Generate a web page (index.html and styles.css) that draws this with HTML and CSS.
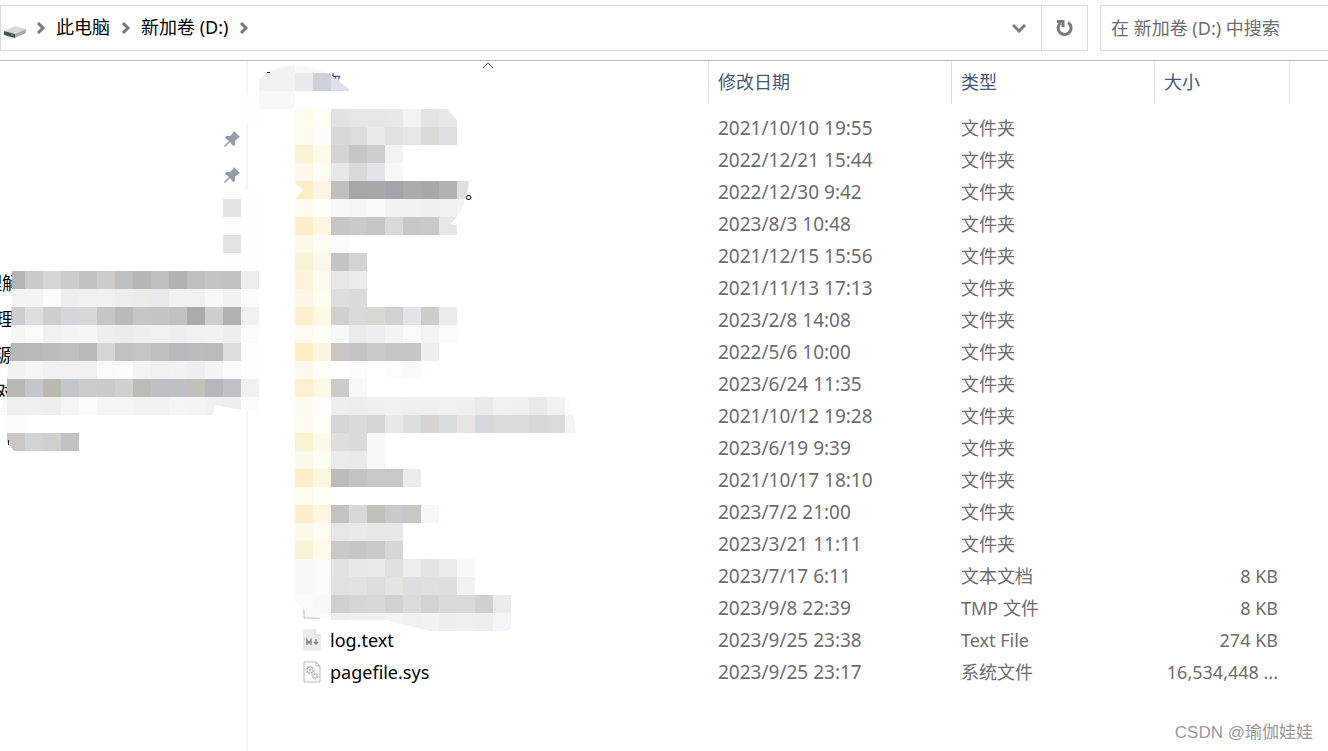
FILE: index.html
```
<!DOCTYPE html>
<html lang="zh-CN">

<head>
    <meta charset="UTF-8">
    <meta name="viewport" content="width=device-width, initial-scale=1.0">
    <title>新加卷 (D:)</title>
    <link rel="stylesheet" href="styles.css">
</head>

<body>
    <header class="toolbar">
        <div class="address">
            <svg class="drive" width="24" height="14" viewBox="0 0 24 14">
                <path d="M1 6 12 1l11 3-11 5z" fill="#d9dadc" />
                <path d="M1 6l11 3v4L1 10z" fill="#4b4f50" />
                <path d="M12 9l11-5v4l-11 5z" fill="#a9abae" />
                <path d="M8 9h2v2H8z" fill="#3fae49" />
            </svg>
            <svg class="sep" width="10" height="12" viewBox="0 0 10 12"><path d="M2 1l5 5-5 5" /></svg>
            <button class="crumb">此电脑</button>
            <svg class="sep" width="10" height="12" viewBox="0 0 10 12"><path d="M2 1l5 5-5 5" /></svg>
            <button class="crumb">新加卷 (D:)</button>
            <svg class="sep" width="10" height="12" viewBox="0 0 10 12"><path d="M2 1l5 5-5 5" /></svg>
            <button class="drop" aria-label="历史记录">
                <svg width="14" height="10" viewBox="0 0 14 10"><path d="M1 2l6 6 6-6" /></svg>
            </button>
            <button class="refresh" aria-label="刷新">
                <svg width="18" height="18" viewBox="0 0 18 18">
                    <path d="M12 3.5A6.5 6.5 0 1 1 4.5 4" />
                    <path d="M1 2.5h6v5.500" />
                </svg>
            </button>
        </div>
        <input class="search" type="text" placeholder="在 新加卷 (D:) 中搜索" aria-label="搜索">
    </header>

    <div class="content">
        <nav class="side">
            <ul class="pins">
                <li><svg width="16" height="16" viewBox="0 0 16 16"><path d="M10 0l6 6-2 1-3 3v4l-2 1-3-4-5 5-1-1 5-5-4-3 1-2h4l3-3z" /></svg></li>
                <li><svg width="16" height="16" viewBox="0 0 16 16"><path d="M10 0l6 6-2 1-3 3v4l-2 1-3-4-5 5-1-1 5-5-4-3 1-2h4l3-3z" /></svg></li>
            </ul>
            <ul class="folders">
                <li class="long">理解</li>
                <li>理</li>
                <li>源</li>
                <li>对</li>
            </ul>
        </nav>

        <main class="files">
            <table>
                <colgroup>
                    <col>
                    <col class="col-date">
                    <col class="col-type">
                    <col class="col-size">
                </colgroup>
                <thead>
                    <tr>
                        <th class="name">
                            <svg class="sort" width="12" height="7" viewBox="0 0 12 7"><path d="M1 6l5-5 5 5" /></svg>
                            名称
                        </th>
                        <th>修改日期</th>
                        <th>类型</th>
                        <th>大小</th>
                    </tr>
                </thead>
                <tbody id="rows"></tbody>
            </table>
        </main>

        <svg class="mosaic" width="600" height="640" viewBox="0 61 600 640">
            <defs>
                <clipPath id="clipSide">
                    <path d="M223 199h18v18h-18zM223 235h18v18h-18zM12 271H259V412L241 410 215 405 213 415H25V433H79V451H14L7 442V415H0L7 380 11 343z" />
                </clipPath>
                <clipPath id="clipHead">
                    <path d="M259 79Q275 65 295 65.500Q315 66 331 75L349 89V91H295V109H259z" />
                </clipPath>
                <clipPath id="clipList">
                    <path d="M295 109H447L457 120V181H469Q466 211 450 224L457 225V397H565Q575 412 576 433H511V629L507 631H430Q405 625 405 625L386 620H331L310 616 295 601V199L303 190 295 183z" />
                </clipPath>
            </defs>
            <path d="M241 95h18v30h-18zM241 190h18v221h-18zM223 190h18v81h-18z" fill="#fefefe" />
            <g id="side" clip-path="url(#clipSide)"></g>
            <g id="head" clip-path="url(#clipHead)"></g>
            <g id="list" clip-path="url(#clipList)"></g>
            <path d="M267 72h3v1h-3zM8 440h1v5h-1z" fill="#222" />
        </svg>

        <p class="watermark">CSDN @瑜伽娃娃</p>
    </div>

    <script>
        const files = [
            ['', '2021/10/10 19:55', '文件夹', ''],
            ['', '2022/12/21 15:44', '文件夹', ''],
            ['。', '2022/12/30 9:42', '文件夹', '', 'dot'],
            ['', '2023/8/3 10:48', '文件夹', ''],
            ['', '2021/12/15 15:56', '文件夹', ''],
            ['', '2021/11/13 17:13', '文件夹', ''],
            ['', '2023/2/8 14:08', '文件夹', ''],
            ['', '2022/5/6 10:00', '文件夹', ''],
            ['', '2023/6/24 11:35', '文件夹', ''],
            ['', '2021/10/12 19:28', '文件夹', ''],
            ['', '2023/6/19 9:39', '文件夹', ''],
            ['', '2021/10/17 18:10', '文件夹', ''],
            ['', '2023/7/2 21:00', '文件夹', ''],
            ['', '2023/3/21 11:11', '文件夹', ''],
            ['', '2023/7/17 6:11', '文本文档', '8 KB'],
            ['', '2023/9/8 22:39', 'TMP 文件', '8 KB', 'blank'],
            ['log.text', '2023/9/25 23:38', 'Text File', '274 KB', 'md'],
            ['pagefile.sys', '2023/9/25 23:17', '系统文件', '16,534,448 ...', 'sys'],
        ];

        const page = '<path d="M1 1h12l4 4v16H1z" fill="#fcfcfc" stroke="#b9b9b9" /><path d="M13 1v4h4" fill="none" stroke="#b9b9b9" />';
        const icons = {
            blank: page,
            md: '<path d="M0 0h12l6 6v16H0z" fill="#ececec" /><path d="M12 0v6h6" fill="#fff" stroke="#d8d8d8" />' +
                '<path d="M4 16v-5l2 3 2-3v5M13 10v5M11 13l2 2 2-2" fill="none" stroke="#8a8a8a" stroke-width="1.5" />',
            sys: page +
                '<g fill="none" stroke="#b6bec4"><circle cx="7" cy="9" r="4" stroke-dasharray="2 1" /><circle cx="7" cy="9" r="3" /><circle cx="7" cy="9" r="1" />' +
                '<circle cx="12" cy="15" r="3" stroke-dasharray="2 1" /><circle cx="12" cy="15" r="2" /></g>',
        };

        document.getElementById('rows').innerHTML = files.map(([name, date, type, size, kind]) => {
            const icon = icons[kind] ? `<svg width="18" height="22" viewBox="0 0 18 22">${icons[kind]}</svg>` : '';
            return `<tr>
                <td class="name ${kind || ''}">${icon}<span>${name}</span></td>
                <td class="date">${date}</td>
                <td>${type}</td>
                <td class="size">${size}</td>
            </tr>`;
        }).join('');

        // each line is: x, y of the first block, then one colour per block, '-' skips a block
        const size = 18;
        const mosaic = {
            side: `223 199 e3e4e6
                223 235 e3e4e6
                7 271 b3b4b6 c9cbca d5d5d5 cecccb c2c2c2 cecbc9 bdc0c3 b6b6b6 bcbec1 b2b2b2 bebebe c4c4c4 c4c2c1 eceeed
                7 289 f4f4f4 f4f4f4 f8fcfa eeeeee f0f0f1 f1f1f1 eceeed eaecea e9e9e9 f1f1f1 f1f1f1 f8f8f8 f2f2f2 fcfcfc
                7 307 cbcdd0 dedede d0cecc d4d6d9 d9d7d5 c5c5c4 bababa c5c5c4 c4c4c4 bfc1c5 a9acab cecece b0b3b1 eff1f0
                7 325 f6f6f6 fcfcfa f0f0f0 f4f4f5 f6f6f4 eeeeee ececec eeeeee f0f0f0 eeeeee f1f1f1 f2f2f2 f0eeed fafcfb
                7 343 b6b8b7 b9b9b9 bdbbb9 bdc0bf bababa d5d5d5 c1c1c1 c5c5c4 c1bfbd b7b9bc bcbcba bbbbbb dadddb fefefe
                7 361 f0f3f2 f5f5f6 eff1f0 f0f0ee eff1f0 fafafa fcfcfc f4f4f5 f0f0f0 f2f2f3 eeeeee f4f4f5 f8fbfa fefefe
                7 379 bab8b6 c4c6ca bbb7b1 c2c6ca cbcbcb cacaca d0d0d0 bbbbb8 bfc0c3 bfc0c3 c2c0bb b5b7bb bfc1c6 f0f0f0
                -11 397 f8f8f8 efefef efefef eeeeec f5f5f6 f8fbf9 f5f5f6 f5f5f6 f0f1f0 f0f1f0 f5f5f6 f4f4f2 eff1f0 eeeeef fcfcfc
                7 415 fafafa
                7 433 c9c8c6 d2d3d5 cfcfcc c1c2c6`,
            head: `259 55 f2f2f2 f2f2f2 f8f8f8 f8f8f8 f8f8f8
                259 73 f2f2f2 f2f2f2 e9eaee cdd1da dde1e7
                259 91 f8f8f8 f8f8f8`,
            list: `295 109 fffaec fffdf6 e3e2e2 e6e6e7 e6e6e7 e6e9e8 f3f3f3 e3e3e2 e7e7e7
                295 127 fffaed fdfcf8 d9d8d7 dadcdf e8eae9 e1e1e2 e6e6e6 d9d9d7 e0e0e3
                295 145 fbf2d4 fef9e9 d4d4d2 c4c7c6 cececd f3f3f3
                295 163 fcf9ea fffcf5 e6e7e9 dbd9d7 e1e3e6 f8f8f8
                295 181 fdecc5 fef5e2 c1bfbe a5a8ab a8a8a6 a2a5a9 adabac a8a8a8 b1b3b2 dee0df
                295 199 fffbef fffdf7 f7f8f8 f4f7f7 f9f9f9 f2f2f2 f2f2f2 efefee f0f0f0 f4f4f4
                295 217 fceec8 fdf6e3 c6c6c7 cccac8 c4c6ca d9d9d7 c5c8c6 cbc9c7 e4e6e9
                295 235 fef9e7 fffcf5 fcfcfd
                295 253 fbf2d3 fdf7e9 c4c4c4 d2d3d5
                295 271 fef2dc fefaef e6e6e4 eaeceb
                295 289 fef6e4 fffcf0 dededf d9dbda
                295 307 fdefcc fff8e3 d0d0ce d9d9da d8d7d4 d1d1d2 e2e4e7 cecccb ebebeb
                295 325 fefaef fefef9 f8f8f8 ebebec eeeeee f4f4f4 f9fafd f1f4f3 fafafa
                295 343 fceec4 fef4e1 cbc6c5 c1c5c9 cacacb c7c6c4 c3c6c5 eeeeee
                295 361 fdf9ed fefef9 - fcfcfd - fdfdfd f8f9f9
                295 379 fcf0d1 fef8e5 cbcbcb f6f9f8
                295 397 fefaef fefefb eeeeef ebeeed efefed eef1f0 efefef efefed f0f0f0 efefef e8ebea f0f0f0 efefef e9e9e9 f1f1f1 fbfbfb
                295 415 fffaee fefdf6 d5d5d5 dcdad9 d2d6d7 e8e8e9 dcdee0 d5d4d0 d9dbde e6e5e3 d5d8dc dddbd9 dadbdf d6d7da dbdbdc f4f4f4
                295 433 fbf2d1 fef9e8 dededf dbdad8 f6f8fb
                295 451 fbf9ea fefcf5 ebebeb eaeaeb f7f7f7
                295 469 fbeec6 fcf6dd b9bdbb c3c3c1 cac8c6 c6c8cb e9ebed
                295 487 fefaef fefef9
                295 505 fceecb fdf6e1 c3c3c3 d6d9d8 c3bfbb c9cacd c9c7c5 f5f7fa
                295 523 fdf9e6 fefcf3 e5e6e7 e9e9e7 e7e7e7 e8e8e8
                295 541 fbf1d4 fef9e8 c8c8c6 c6c6c4 c9c9c7 d5d6d8
                295 559 f7f8f8 f9fafa e2e2e0 e8e8e6 e9e9e9 e0e0e0 ededed e3e3e1 ebebeb f6f9f8
                295 577 f7f8f8 f9fafa e1e1df e2e2e1 dddddd e5e4e2 dddee1 e0e0e0 dededc eef2f0
                295 595 f8fbfa f8f8f9 d0d0d0 d5d5d3 d7d7d7 d2d0d1 d9dbde d2d2d2 d9d9d9 dbd9d7 d0d0d0 eaebee
                295 613 fafafa fafafa eeeeec f0f0f0 f0f0f0 f3f3f1 f0f0f0 f2f2f2 eeeeee efefef f0eeed f4f5f8`,
        };

        for (const id in mosaic) {
            document.getElementById(id).innerHTML = mosaic[id].split('\n').map((line) => {
                const [x, y, ...colors] = line.trim().split(' ');
                return colors.map((color, i) => color === '-' ? '' :
                    `<rect x="${Number(x) + i * size}" y="${y}" width="${size}" height="${size}" fill="#${color}" />`
                ).join('');
            }).join('');
        }
    </script>
</body>

</html>
```
FILE: styles.css
```
* {
    margin: 0;
    padding: 0;
    box-sizing: border-box;
}

body {
    min-height: 100vh;
    display: flex;
    flex-direction: column;
    background-color: #fff;
    color: #000;
    font-family: "Noto Sans", "Noto Sans CJK SC", sans-serif;
    font-size: 18px;
    overflow-x: hidden;
}

button {
    border: none;
    background: none;
    font: inherit;
    color: inherit;
}

ul {
    list-style: none;
}

/* address bar */
.toolbar {
    display: flex;
    gap: 12px;
    height: 61px;
    padding: 5px 0 9px;
    border-bottom: 1px solid #b9b9b9;
}

.address {
    flex: 1;
    display: flex;
    align-items: center;
    border: 1px solid #d9d9d9;
    padding-left: 2px;
}

.address svg {
    flex: none;
    fill: none;
    stroke: #7a7a7a;
    stroke-width: 3;
}

.address .drive {
    stroke: none;
    margin: 8px 8px 0 0;
}

.address .sep {
    margin-left: 1px;
}

.crumb {
    margin: 0 10px;
    padding-bottom: 2px;
    line-height: 24px;
}

.drop {
    margin-left: auto;
    padding: 0 15px;
}

.refresh {
    align-self: stretch;
    width: 46px;
    border-left: 1px solid #d9d9d9;
}

.drop svg,
.refresh svg {
    display: block;
    margin: auto;
}

.search {
    width: 228px;
    border: 1px solid #d9d9d9;
    border-right: none;
    padding-left: 10px;
    font: inherit;
    outline: none;
}

.search::placeholder {
    color: #6d6d6d;
}

/* panes */
.content {
    position: relative;
    flex: 1;
    display: flex;
}

.side {
    width: 248px;
    border-right: 2px solid #f5f5f5;
    padding-top: 60px;
    overflow: hidden;
}

.pins li {
    display: flex;
    align-items: center;
    justify-content: flex-end;
    height: 36px;
    padding-right: 6px;
}

.pins path {
    fill: #939da5;
}

.folders {
    margin-top: 72px;
}

.folders li {
    height: 36px;
    line-height: 36px;
    text-indent: -4px;
}

.folders .long {
    text-indent: -16px;
}

.files {
    flex: 1;
    padding: 0 38px 0 19px;
}

table {
    width: 100%;
    table-layout: fixed;
    border-collapse: separate;
    border-spacing: 0;
}

.col-date {
    width: 243px;
}

.col-type {
    width: 203px;
}

.col-size {
    width: 135px;
}

th {
    height: 43px;
    padding: 0 0 4px 9px;
    border-right: 1px solid #e3e3e3;
    color: #44597a;
    font-weight: normal;
    text-align: left;
}

th.name {
    position: relative;
    padding-left: 38px;
}

.sort {
    position: absolute;
    top: 1px;
    left: 50%;
    margin-left: -6px;
    fill: none;
    stroke: #555;
}

tbody::before {
    content: "";
    display: block;
    height: 8px;
}

td {
    height: 32px;
    line-height: 32px;
    padding-left: 9px;
    color: #6d6d6d;
    white-space: nowrap;
}

td.date {
    font-size: 19px;
}

td.size {
    padding-right: 12px;
    text-align: right;
}

td.name {
    display: flex;
    align-items: center;
    gap: 9px;
    padding-left: 36px;
    color: #000;
}

td.dot {
    padding-left: 198px;
}

.mosaic {
    position: absolute;
    top: 0;
    left: 0;
    pointer-events: none;
}

.watermark {
    position: absolute;
    right: 15px;
    bottom: 6px;
    color: #999;
    font-family: "Liberation Sans", "Noto Sans CJK SC", sans-serif;
    font-size: 17px;
    line-height: 24px;
}
```
